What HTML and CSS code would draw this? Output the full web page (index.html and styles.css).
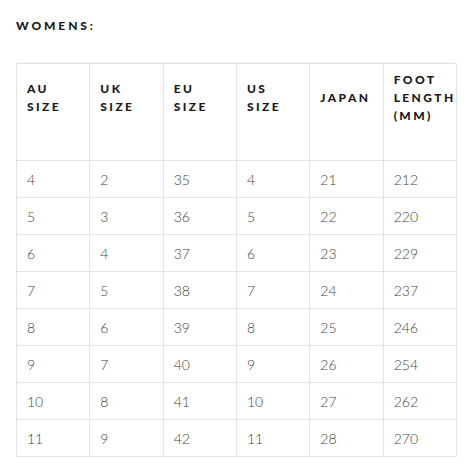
FILE: index.html
```html
<!DOCTYPE html>
<html>
<head>
<meta charset="utf-8">
<link rel="stylesheet" href="styles.css">
</head>
<body>
<div class="page">
  <h3 class="title">WOMENS:</h3>
  <table class="sizes">
    <thead>
      <tr>
        <th>AU<br>SIZE</th>
        <th>UK<br>SIZE</th>
        <th>EU<br>SIZE</th>
        <th>US<br>SIZE</th>
        <th>JAPAN</th>
        <th>FOOT<br>LENGTH<br>(MM)</th>
      </tr>
    </thead>
    <tbody>
      <tr><td>4</td><td>2</td><td>35</td><td>4</td><td>21</td><td>212</td></tr>
      <tr><td>5</td><td>3</td><td>36</td><td>5</td><td>22</td><td>220</td></tr>
      <tr><td>6</td><td>4</td><td>37</td><td>6</td><td>23</td><td>229</td></tr>
      <tr><td>7</td><td>5</td><td>38</td><td>7</td><td>24</td><td>237</td></tr>
      <tr><td>8</td><td>6</td><td>39</td><td>8</td><td>25</td><td>246</td></tr>
      <tr><td>9</td><td>7</td><td>40</td><td>9</td><td>26</td><td>254</td></tr>
      <tr><td>10</td><td>8</td><td>41</td><td>10</td><td>27</td><td>262</td></tr>
      <tr><td>11</td><td>9</td><td>42</td><td>11</td><td>28</td><td>270</td></tr>
    </tbody>
  </table>
</div>
</body>
</html>
```

FILE: styles.css
```css
html, body {
  margin: 0;
  padding: 0;
  background: #ffffff;
}

.page {
  padding: 18px 17px 0 16px;
  font-family: Lato, "Liberation Sans", sans-serif;
}

.title {
  margin: 0 0 29px 0;
  font-size: 12px;
  line-height: 16px;
  font-weight: 900;
  letter-spacing: 2.9px;
  color: #1a1a1a;
}

.sizes {
  width: 441px;
  border-collapse: collapse;
  table-layout: fixed;
  box-shadow: 0 -5px 0 -4px #f2f2f2;
}

.sizes th,
.sizes td {
  border: 1px solid #e4e4e4;
  text-align: left;
}

.sizes th {
  height: 54px;
  padding: 7px 4px 35px 10px;
  font-size: 12px;
  line-height: 18px;
  font-weight: 900;
  letter-spacing: 2.4px;
  color: #1a1a1a;
  vertical-align: middle;
}

.sizes td {
  height: 36px;
  padding: 0 10px;
  font-size: 14px;
  font-weight: 300;
  color: #444444;
  vertical-align: middle;
}
```
